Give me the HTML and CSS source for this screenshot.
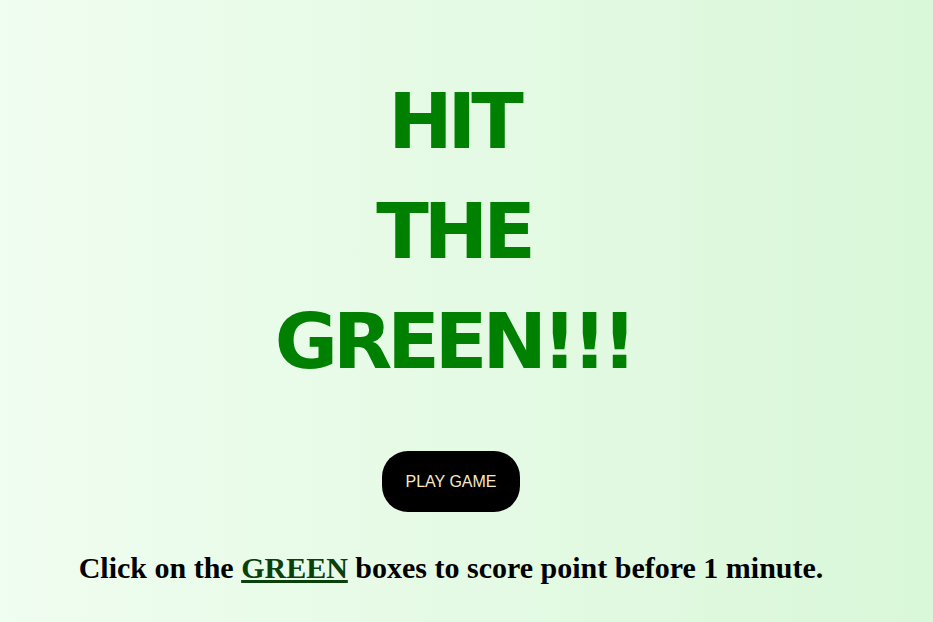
FILE: index.html
```html
<!DOCTYPE html>
<html>
<head>
<meta charset="utf-8">
<title>Hit the Green</title>
<link rel="stylesheet" href="styles.css">
</head>
<body>
<main class="page">
  <h1 class="title">HIT<br>THE<br>GREEN!!!</h1>
  <button class="play">PLAY GAME</button>
  <p class="info">Click on the <a class="green-link" href="#">GREEN</a> boxes to score point before 1 minute.</p>
</main>
</body>
</html>
```
FILE: styles.css
```css
html, body {
  margin: 0;
  height: 100%;
}
body {
  background: linear-gradient(to right, #f0fdf0, #d9f7d9);
  font-family: "Liberation Serif", serif;
}
.page {
  display: flex;
  flex-direction: column;
  align-items: center;
  padding: 67px 31px 0 0;
}
.title {
  margin: 0;
  padding-left: 5px;
  font-family: "Comic Sans MS", "DejaVu Sans", sans-serif;
  font-weight: bold;
  font-size: 77px;
  line-height: 110px;
  letter-spacing: -5px;
  color: #008000;
  text-align: center;
}
.play {
  margin-top: 54px;
  width: 138px;
  height: 61px;
  border: none;
  border-radius: 26px;
  background: #000;
  color: #f8e8c8;
  font-family: "Liberation Sans", Arial, sans-serif;
  font-size: 16px;
  cursor: pointer;
}
.info {
  margin: 39px 0 0;
  font-size: 30px;
  font-weight: bold;
  color: #000;
}
.green-link {
  color: #0a400a;
}
```
